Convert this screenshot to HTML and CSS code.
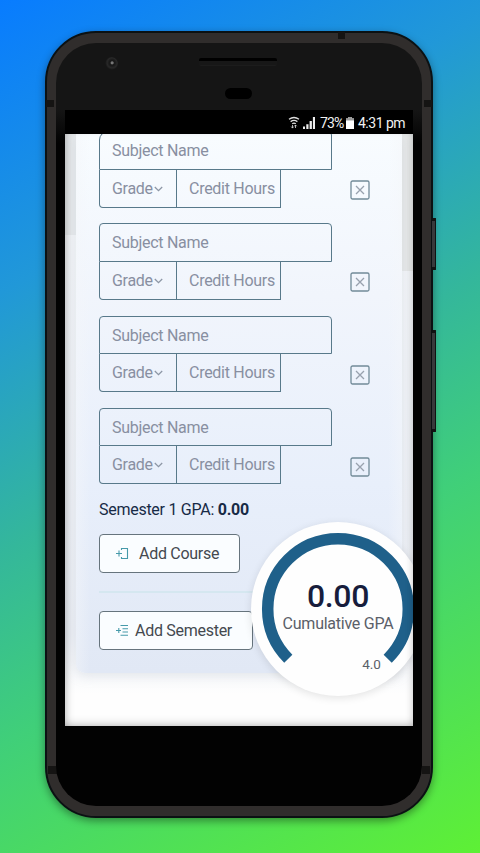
FILE: index.html
```html
<!DOCTYPE html>
<html lang="en">
<head>
<meta charset="utf-8">
<meta name="viewport" content="width=device-width, initial-scale=1">
<title>GPA Calculator</title>
<link rel="stylesheet" href="styles.css">
</head>
<body>
<div class="device">
  <i class="key key-power"></i><i class="key key-volume"></i>
  <i class="seam seam-top"></i><i class="seam seam-left"></i><i class="seam seam-right"></i><i class="seam seam-bl"></i><i class="seam seam-br"></i>
  <div class="face">
    <i class="camera"></i><i class="speaker"></i><i class="sensor"></i>
    <div class="screen">
      <header class="status">
        <svg class="wifi" viewBox="0 0 12 13" width="12" height="13" fill="none" stroke="#ddd" stroke-width="1.3"><path d="M1 3.2Q6-.2 11 3.2M2.6 5.6Q6 3.2 9.4 5.6M4.2 7.8Q6 6.6 7.8 7.8"/><path d="M4.5 9v3M3.2 10.6l1.3 1.5 1.2-1.5M7.5 12V9M6.4 10.2 7.5 9l1.2 1.2" stroke-width=".8"/></svg>
        <svg class="signal" viewBox="0 0 12 12" width="12" height="12" fill="#eee"><path d="M0 9.500h2V12H0zM3.300 7.200h2.200V12H3.300zM6.600 4h2.300v8H6.600zM9.900 0H12v12H9.900z"/></svg>
        <span class="percent">73%</span>
        <svg class="battery" viewBox="0 0 8 12" width="8" height="12"><path d="M2.300 0h3.400v1.500H8V12H0V1.500h2.300z" fill="#fff"/><path d="M2.300 0h3.400v1.500H8v2H0v-2h2.300z" fill="#999"/></svg>
        <span class="clock">4:31 pm</span>
      </header>
      <main class="page">
        <section class="panel">
          <div class="course"><div class="fields"><div class="name">Subject Name</div><div class="details"><div class="grade">Grade<svg viewBox="0 0 9 6" width="9" height="6"><path d="M.8 1 4.500 4.600 8.200 1"/></svg></div><div class="credit">Credit Hours</div></div></div><svg class="remove" viewBox="0 0 20 20" width="20" height="20"><rect x="1" y="1" width="18" height="18" rx="1.500"/><path d="m6 6 8 8M14 6l-8 8"/></svg></div>
          <div class="course"><div class="fields"><div class="name">Subject Name</div><div class="details"><div class="grade">Grade<svg viewBox="0 0 9 6" width="9" height="6"><path d="M.8 1 4.500 4.600 8.200 1"/></svg></div><div class="credit">Credit Hours</div></div></div><svg class="remove" viewBox="0 0 20 20" width="20" height="20"><rect x="1" y="1" width="18" height="18" rx="1.500"/><path d="m6 6 8 8M14 6l-8 8"/></svg></div>
          <div class="course"><div class="fields"><div class="name">Subject Name</div><div class="details"><div class="grade">Grade<svg viewBox="0 0 9 6" width="9" height="6"><path d="M.8 1 4.500 4.600 8.200 1"/></svg></div><div class="credit">Credit Hours</div></div></div><svg class="remove" viewBox="0 0 20 20" width="20" height="20"><rect x="1" y="1" width="18" height="18" rx="1.500"/><path d="m6 6 8 8M14 6l-8 8"/></svg></div>
          <div class="course"><div class="fields"><div class="name">Subject Name</div><div class="details"><div class="grade">Grade<svg viewBox="0 0 9 6" width="9" height="6"><path d="M.8 1 4.500 4.600 8.200 1"/></svg></div><div class="credit">Credit Hours</div></div></div><svg class="remove" viewBox="0 0 20 20" width="20" height="20"><rect x="1" y="1" width="18" height="18" rx="1.500"/><path d="m6 6 8 8M14 6l-8 8"/></svg></div>
          <p class="semester">Semester 1 GPA: <b>0.00</b></p>
          <div class="button add-course"><svg viewBox="0 0 13 13" width="13" height="13"><path d="M0 6.500h6M3 3.500v6"/><path d="M5.500 3V1.500h6v10h-6V10"/></svg>Add Course</div>
          <hr class="rule">
          <div class="button add-semester"><svg viewBox="0 0 13 13" width="13" height="13"><path d="M0 6.500h5M2.800 4v5M4.500 1.500H12M6.500 4.800H12M6.500 8H12M4.500 11.300H12"/></svg>Add Semester</div>
        </section>
        <aside class="gauge">
          <svg viewBox="0 0 174 174" width="174" height="174"><path d="M37.300 136.700A70.300 70.300 0 1 1 136.700 136.700" fill="none" stroke="#1f608a" stroke-width="11.500"/></svg>
          <div class="reading"><strong>0.00</strong><span>Cumulative GPA</span><small>4.0</small></div>
        </aside>
      </main>
    </div>
  </div>
</div>
</body>
</html>
```
FILE: styles.css
```css
* { box-sizing: border-box; }
body {
  margin: 0;
  width: 480px;
  height: 853px;
  overflow: hidden;
  padding: 31px 0 0 45px;
  font-family: Roboto, sans-serif;
  background: linear-gradient(150deg, #087cff 0%, #2198d8 26%, #34b79b 49%, #40cf79 66%, #5ef035 100%);
}
.device {
  position: relative;
  width: 388px;
  height: 787px;
  padding: 10px 9px 10px;
  border: 2px solid #0b1113;
  border-radius: 51px;
  background: #302d2c;
  box-shadow: 0 3px 9px #0006;
}
.face {
  position: relative;
  height: 763px;
  padding: 67px 8px 0 9px;
  border-radius: 40px;
  background: linear-gradient(#151515 0 67px, #020202 100px);
}
.key { position: absolute; left: 385px; width: 4px; border-radius: 1px; background: #38393b; border: solid #111; border-width: 3px 1px 3px 0; }
.key-power { top: 185px; height: 52px; }
.key-volume { top: 297px; height: 102px; }
.seam { position: absolute; background: #151413; }
.seam-top { left: 291px; top: -1px; width: 7px; height: 7px; }
.seam-left { left: -1px; top: 67px; width: 8px; height: 7px; }
.seam-right { left: 377px; top: 67px; width: 8px; height: 7px; }
.seam-bl { left: 1px; top: 733px; width: 9px; height: 8px; }
.seam-br { left: 375px; top: 733px; width: 8px; height: 8px; }
.camera { position: absolute; left: 49px; top: 14px; width: 13px; height: 13px; border-radius: 50%; background: radial-gradient(circle at 55% 45%, #777 0 1px, #191919 2px 3px, #282828 5px, #151515 7px); }
.speaker { position: absolute; left: 143px; top: 15px; width: 78px; height: 8px; border-top: 3px solid #000; border-bottom: 1px solid #1c1c1c; background: #171717; border-radius: 2px; }
.sensor { position: absolute; left: 169px; top: 45px; width: 27px; height: 11px; border-radius: 6px; background: #000; }
.screen { width: 348px; height: 616px; }
.status {
  display: flex;
  align-items: center;
  justify-content: flex-end;
  height: 24px;
  padding: 3px 8px 0 0;
  background: #000;
  color: #f1f1f1;
  font-size: 14px;
  line-height: 20px;
}
.wifi { margin: -3px 3px 0 0; }
.signal { margin: -2px 5px 0 0; }
.percent { width: 23px; margin-right: 3px; letter-spacing: -0.9px; }
.battery { margin: -1px 4px 0 0; }
.clock { width: 47px; white-space: nowrap; letter-spacing: -0.5px; }
.status span { margin-top: -2px; }
.page {
  position: relative;
  height: 592px;
  padding: 0 11px;
  overflow: hidden;
  background: linear-gradient(#e8ebed, #e8ebed) 0 0 / 11px 101px no-repeat, linear-gradient(#e7e9e9, #e7e9e9) 100% 0 / 11px 137px no-repeat, linear-gradient(#f6f8fa, #edf0f6 500px, #fefefe 560px);
}
.page::after { content: ""; position: absolute; inset: 0; pointer-events: none; box-shadow: inset 0 -5px 10px -4px #00000040, inset 7px 0 9px -6px #00000038, inset -6px 0 8px -6px #00000028; }
.panel {
  display: flow-root;
  width: 326px;
  height: 539px;
  padding: 0 0 0 23px;
  border-radius: 0 0 9px 9px;
  background: linear-gradient(90deg, #f4f6f977, #f4f6f900 14px 312px, #f4f6f977), linear-gradient(#f8fcff 0%, #f1f5fc 30%, #e8effb 65%, #e1e8f5 100%);
  box-shadow: 0 3px 12px #a5afc144;
}
.course { display: flex; align-items: flex-start; height: 76.500px; margin-bottom: 15.800px; }
.course:first-child { margin-top: -3px; }
.course:first-child .name { border-radius: 9px 4px 0 0; }
.fields { width: 233px; color: #888fa1; font-size: 16px; line-height: 37px; letter-spacing: -0.28px; }
.name { height: 38.500px; padding-left: 12px; border: 1px solid #58798a; border-radius: 4px 4px 0 0; }
.details { display: flex; width: 182px; height: 38px; border: 1px solid #58798a; border-top: 0; border-radius: 0 0 0 4px; }
.grade { width: 77px; padding-left: 12px; border-right: 1px solid #58798a; white-space: nowrap; }
.grade svg { margin: 0 0 2px 1px; fill: none; stroke: #8c96a5; stroke-width: 1.300; }
.credit { padding-left: 12px; white-space: nowrap; }
.remove { margin: 49px 0 0 18px; fill: none; stroke: #718a98; stroke-width: 1.300; }
.remove path { stroke: #98a1ae; stroke-width: 1.300; }
.semester { margin: 0 0 14px; font-size: 16px; line-height: 20px; color: #172a46; letter-spacing: -0.27px; }
.semester b { font-weight: 700; }
.button { display: flex; align-items: center; height: 39px; padding: 0 0 1px 16px; border: 1px solid #66747d; border-radius: 4px; background: #fafdff; color: #44494f; font-size: 16px; letter-spacing: -0.28px; }
.button svg { fill: none; stroke: #469aaa; stroke-width: 1.100; }
.add-course { width: 141px; }
.add-course svg { margin-right: 10px; }
.rule { width: 280px; height: 2px; margin: 18px 0 18px; border: 0; background: #d5e7f0; }
.add-semester { width: 154px; }
.add-semester svg { margin-right: 6px; }
.gauge { position: absolute; left: 186px; top: 388px; width: 174px; height: 174px; border-radius: 50%; background: #fefefe; box-shadow: 0 2px 9px #0000001c; }
.reading { position: absolute; inset: 0; display: flex; flex-direction: column; align-items: center; color: #5b6069; }
.reading strong { margin-top: 55px; color: #171d3c; font-size: 32px; line-height: 38px; font-weight: 500; letter-spacing: -0.4px; }
.reading span { font-size: 16px; line-height: 18px; white-space: nowrap; letter-spacing: -0.25px; }
.reading small { margin: 23px 0 0 67px; font-size: 13.500px; line-height: 16px; }
```
